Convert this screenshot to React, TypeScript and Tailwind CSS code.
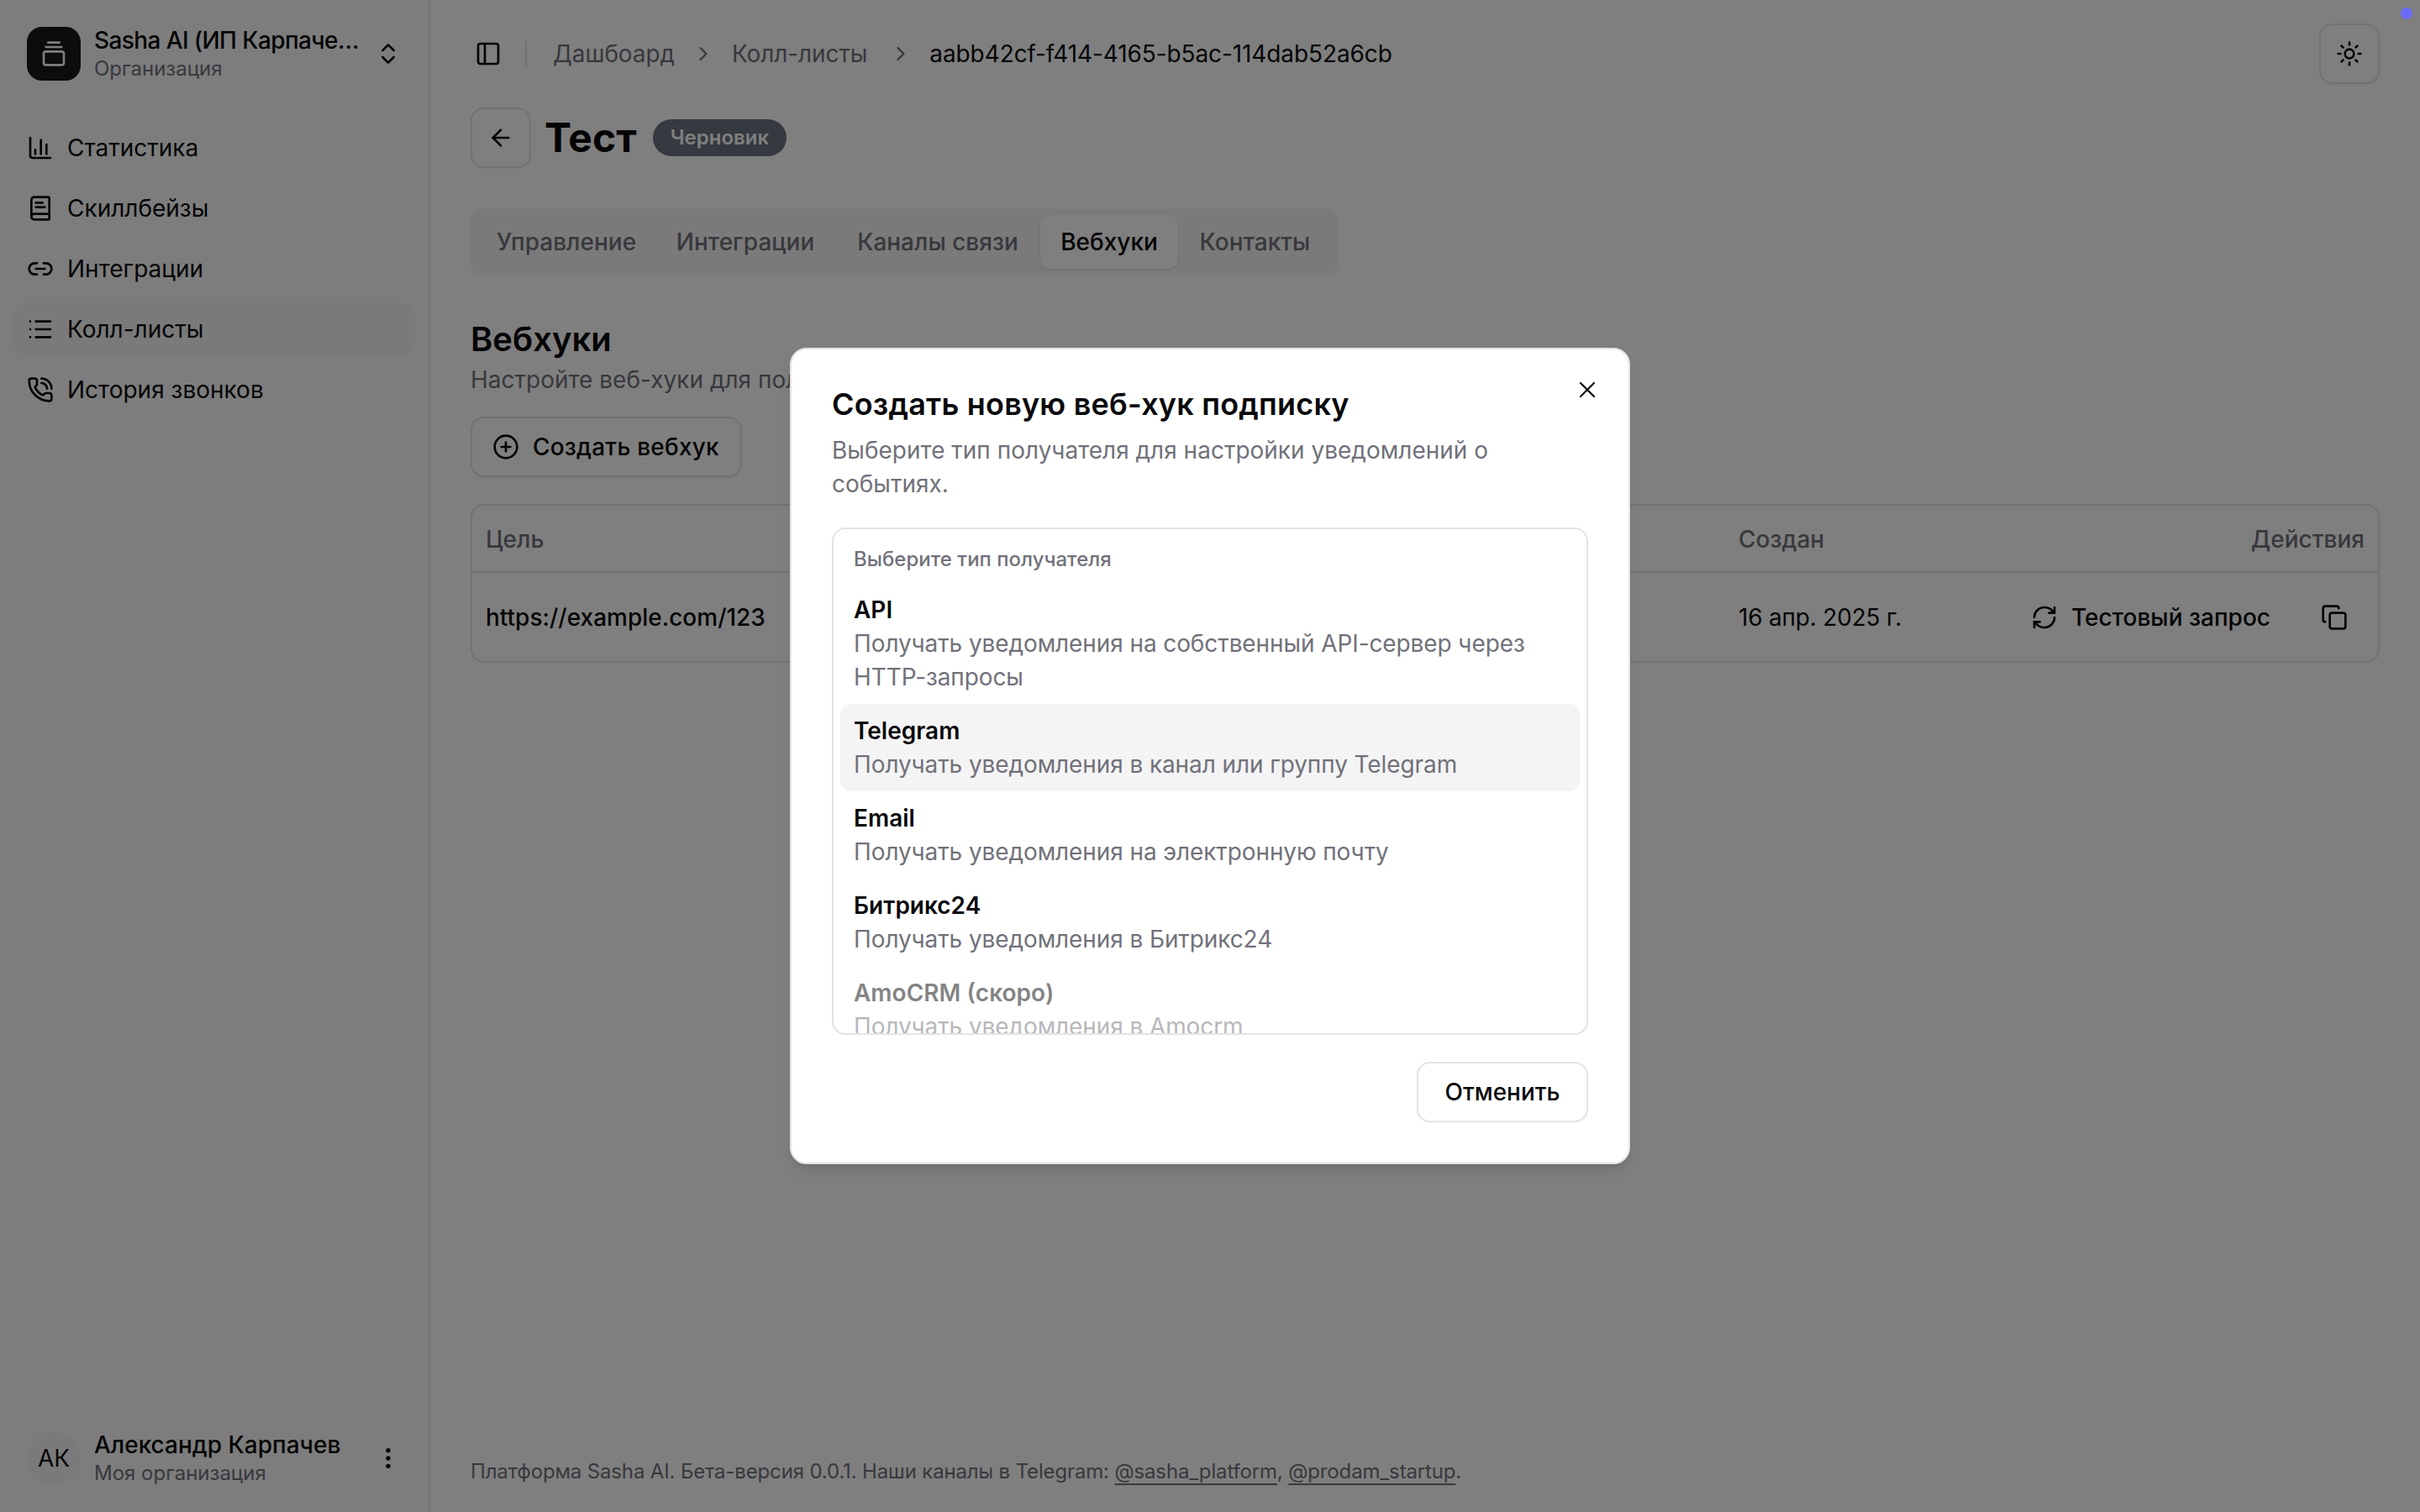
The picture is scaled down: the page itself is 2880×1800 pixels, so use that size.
import React from 'react';
import {
  ArrowLeft,
  BookText,
  ChevronRight,
  ChevronsUpDown,
  CirclePlus,
  Copy,
  EllipsisVertical,
  GalleryVerticalEnd,
  Link2,
  List,
  PanelLeft,
  PhoneCall,
  RefreshCw,
  Sun,
  X,
} from 'lucide-react';

const StatsIcon = () => (
  <svg width="32" height="32" viewBox="0 0 24 24" fill="none" stroke="currentColor" strokeWidth="2" strokeLinecap="round" strokeLinejoin="round">
    <path d="M3 3v16a2 2 0 0 0 2 2h16" />
    <path d="M7.5 17.5v-4" />
    <path d="M12.5 17.5V5" />
    <path d="M17.5 17.5V9" />
  </svg>
);

const navItems = [
  { label: 'Статистика', icon: <StatsIcon /> },
  { label: 'Скиллбейзы', icon: <BookText size={32} /> },
  { label: 'Интеграции', icon: <Link2 size={32} /> },
  { label: 'Колл-листы', icon: <List size={32} />, active: true },
  { label: 'История звонков', icon: <PhoneCall size={32} /> },
];

const tabs = [
  { label: 'Управление', width: 'w-[212px]' },
  { label: 'Интеграции', width: 'w-[214px]' },
  { label: 'Каналы связи', width: 'w-[244px]' },
  { label: 'Вебхуки', width: 'w-[164px]', active: true },
  { label: 'Контакты', width: 'w-[183px]' },
];

const recipients = [
  { title: 'API', text: 'Получать уведомления на собственный API-сервер через HTTP-запросы' },
  { title: 'Telegram', text: 'Получать уведомления в канал или группу Telegram', hover: true },
  { title: 'Email', text: 'Получать уведомления на электронную почту' },
  { title: 'Битрикс24', text: 'Получать уведомления в Битрикс24' },
  { title: 'AmoCRM (скоро)', text: 'Получать уведомления в Amocrm', disabled: true },
];

const Sidebar = () => (
  <aside className="flex w-[512px] shrink-0 flex-col justify-between border-r-2 border-[#e4e4e7] bg-[#fafafa] p-4">
    <div>
      <div className="flex h-[96px] items-center gap-4 rounded-2xl px-4">
        <div className="flex h-16 w-16 shrink-0 items-center justify-center rounded-[18px] bg-[#18181b] text-white">
          <GalleryVerticalEnd size={32} />
        </div>
        <div className="min-w-0 flex-1">
          <div className="truncate text-[28px] leading-[36px] font-medium tracking-[-0.6px]">Sasha AI (ИП Карпачев Александр)</div>
          <div className="truncate text-[24px] leading-[32px] text-[#71717a]">Организация</div>
        </div>
        <ChevronsUpDown size={32} className="shrink-0" />
      </div>
      <nav className="mt-[32px] flex flex-col gap-2">
        {navItems.map((item) => (
          <div
            key={item.label}
            className={`flex h-16 items-center gap-4 rounded-2xl px-4 text-[28px] ${item.active ? 'bg-[#f4f4f5]' : ''}`}
          >
            {item.icon}
            <span>{item.label}</span>
          </div>
        ))}
      </nav>
    </div>
    <div className="flex h-[96px] items-center gap-4 rounded-2xl px-4">
      <div className="flex h-16 w-16 shrink-0 items-center justify-center rounded-full bg-[#f4f4f5] text-[28px]">АК</div>
      <div className="min-w-0 flex-1">
        <div className="truncate text-[28px] leading-[36px] font-medium">Александр Карпачев</div>
        <div className="truncate text-[24px] leading-[32px] text-[#71717a]">Моя организация</div>
      </div>
      <EllipsisVertical size={32} className="shrink-0" />
    </div>
  </aside>
);

const Topbar = () => (
  <header className="flex h-[128px] shrink-0 items-center justify-between pr-12 pl-12">
    <div className="flex items-center text-[28px] tracking-[-0.1px] text-[#71717a]">
      <PanelLeft size={32} className="ml-[5px] text-[#09090b]" />
      <div className="mr-[31px] ml-[28px] h-8 w-[2px] bg-[#e4e4e7]" />
      <span>Дашбоард</span>
      <ChevronRight size={28} className="mx-5" />
      <span>Колл-листы</span>
      <ChevronRight size={28} className="mr-5 ml-[26px]" />
      <span className="text-[#09090b]">aabb42cf-f414-4165-b5ac-114dab52a6cb</span>
    </div>
    <button className="flex h-[72px] w-[72px] items-center justify-center rounded-2xl border-2 border-[#e4e4e7] bg-white shadow-xs">
      <Sun size={32} />
    </button>
  </header>
);

const WebhooksTable = () => (
  <div className="mt-[32px] overflow-hidden rounded-2xl border-2 border-[#e4e4e7] text-[28px]">
    <div className="flex h-[80px] items-center border-b-2 border-[#e4e4e7] px-4 pt-[2px] font-medium text-[#71717a]">
      <div className="w-[1491px]">Цель</div>
      <div className="flex-1">Создан</div>
      <div>Действия</div>
    </div>
    <div className="flex h-[105px] items-center pr-[36px] pl-4">
      <div className="w-[1491px] font-medium">https://example.com/123</div>
      <div className="flex-1 tracking-[-0.2px]">16 апр. 2025 г.</div>
      <div className="flex items-center gap-4 font-medium">
        <RefreshCw size={32} />
        <span className="mr-[44px]">Тестовый запрос</span>
        <Copy size={32} />
      </div>
    </div>
  </div>
);

const Modal = () => (
  <div className="relative flex h-[972px] w-[1000px] flex-col rounded-[20px] border-2 border-[#e4e4e7] bg-white p-12 shadow-lg">
    <X size={32} strokeWidth={1.6} className="absolute top-[32px] right-[33px]" />
    <h2 className="text-[36px] leading-[34px] font-semibold tracking-[0.2px]">Создать новую веб-хук подписку</h2>
    <p className="mt-[18px] text-[28px] leading-[40px] text-[#71717a]">
      Выберите тип получателя для настройки уведомлений о событиях.
    </p>
    <div className="mt-8 h-[604px] shrink-0 overflow-hidden rounded-2xl border-2 border-[#e4e4e7] p-2">
      <div className="px-4 py-3 text-[24px] leading-[32px] font-medium text-[#71717a]">Выберите тип получателя</div>
      {recipients.map((r) => (
        <div
          key={r.title}
          className={`rounded-xl px-4 py-3 text-[28px] leading-[40px] ${r.hover ? 'bg-[#f4f4f5]' : ''} ${r.disabled ? 'opacity-50' : ''}`}
        >
          <div className="font-semibold">{r.title}</div>
          <div className="tracking-[-0.1px] text-[#71717a]">{r.text}</div>
        </div>
      ))}
    </div>
    <div className="mt-8 flex justify-end">
      <button className="flex h-[72px] w-[204px] items-center justify-center rounded-2xl border-2 border-[#e4e4e7] bg-white text-[28px] font-medium shadow-xs">
        Отменить
      </button>
    </div>
  </div>
);

export default function App() {
  return (
    <div className="relative flex h-screen w-screen overflow-hidden bg-white font-[family-name:Inter,sans-serif] text-[#09090b]">
      <Sidebar />
      <div className="flex min-w-0 flex-1 flex-col">
        <Topbar />
        <main className="flex flex-1 flex-col pr-12 pl-12">
          <div className="flex items-center">
            <button className="flex h-[72px] w-[72px] items-center justify-center rounded-2xl border-2 border-[#e4e4e7] bg-white shadow-xs">
              <ArrowLeft size={32} />
            </button>
            <h1 className="ml-4 text-[48px] leading-[56px] font-bold">Тест</h1>
            <span className="ml-[19px] flex h-[44px] items-center rounded-full bg-[#6b7280] px-[21px] text-[24px] font-semibold text-white">
              Черновик
            </span>
          </div>
          <div className="mt-[48px] flex h-[80px] w-fit items-center rounded-2xl bg-[#f4f4f5] p-2 text-[28px] font-medium text-[#71717a]">
            {tabs.map((t) => (
              <div
                key={t.label}
                className={`flex h-16 items-center justify-center rounded-xl ${t.width} ${t.active ? 'bg-white text-[#09090b] shadow-sm' : ''}`}
              >
                {t.label}
              </div>
            ))}
          </div>
          <h2 className="mt-[52px] text-[40px] leading-[48px] font-semibold">Вебхуки</h2>
          <p className="mt-[4px] text-[28px] leading-[40px] text-[#71717a]">
            Настройте веб-хуки для получения уведомлений о событиях
          </p>
          <button className="mt-[24px] flex h-[72px] w-[323px] items-center gap-4 rounded-2xl border-2 border-[#e4e4e7] bg-white pl-6 text-[28px] font-medium tracking-[0.2px] shadow-xs">
            <CirclePlus size={32} />
            Создать вебхук
          </button>
          <WebhooksTable />
          <footer className="mt-auto mb-[32px] text-[24px] leading-[32px] tracking-[-0.15px] text-[#71717a]">
            Платформа Sasha AI. Бета-версия 0.0.1. Наши каналы в Telegram:{' '}
            <span className="underline decoration-2 underline-offset-[6px]">@sasha_platform</span>,{' '}
            <span className="underline decoration-2 underline-offset-[6px]">@prodam_startup</span>.
          </footer>
        </main>
      </div>
      <div className="absolute inset-0 z-10 flex items-center justify-center bg-black/50">
        <Modal />
      </div>
      <div className="absolute top-[9px] right-[9px] z-20 h-[14px] w-[14px] rounded-full bg-[#6b6bf8]" />
    </div>
  );
}
